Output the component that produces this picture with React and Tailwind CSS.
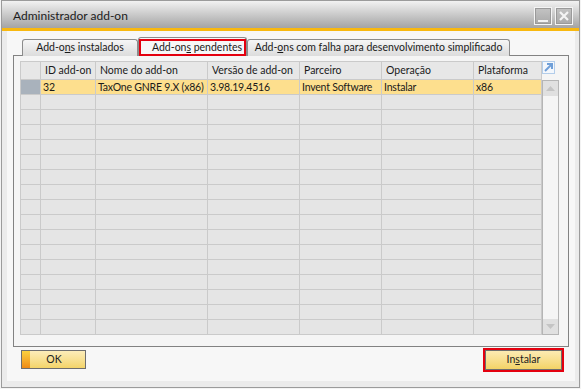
import React from "react";

const columns = [
  { label: "ID add-on", value: "32", width: "w-[55px]" },
  { label: "Nome do add-on", value: "TaxOne GNRE 9.X (x86)", width: "w-[112px]" },
  { label: "Versão de add-on", value: "3.98.19.4516", width: "w-[92px]" },
  { label: "Parceiro", value: "Invent Software", width: "w-[82px]" },
  { label: "Operação", value: "Instalar", width: "w-[92px]" },
  { label: "Plataforma", value: "x86", width: "w-[68px]" },
];

const emptyRows = Array.from({ length: 16 });

function WindowButton({ children }) {
  return (
    <div className="w-[18px] h-[18px] border border-[#f4f4f4] bg-linear-to-b from-[#c4c4c4] to-[#a9a9a9] flex items-center justify-center shadow-[inset_0_0_0_1px_#9a9a9a]">
      {children}
    </div>
  );
}

function Tab({ children, width }) {
  return (
    <div
      className={`${width} h-[17px] shrink-0 border border-b-0 border-[#8c8c8c] rounded-t-[3px] bg-linear-to-b from-[#f6f6f6] to-[#dcdcdc] flex items-center justify-center text-[10.5px] text-[#1a1a1a]`}
    >
      {children}
    </div>
  );
}

export default function App() {
  return (
    <div className="w-[581px] h-[389px] bg-[#f3f3f3] font-['Lato',sans-serif] overflow-hidden">
      <div className="ml-[1px] w-[579px] h-[388px] border border-[#9b9b9b] flex flex-col bg-[#ebebeb]">
        {/* TITLE BAR */}
        <div className="h-[27px] shrink-0 bg-linear-to-b from-[#f2f2f2] to-[#a4a4a4] flex items-center pl-[11px] pr-[6px]">
          <span className="text-[12px] text-[#1c1c1c] pt-[2px]">Administrador add-on</span>
          <div className="ml-auto flex gap-[3px] mt-[2px]">
            <WindowButton>
              <div className="w-[10px] h-[2px] bg-[#f2f2f2] mt-[10px]" />
            </WindowButton>
            <WindowButton>
              <svg width="10" height="10" viewBox="0 0 10 10">
                <path d="M1 1 L9 9 M9 1 L1 9" stroke="#f4f4f4" strokeWidth="2.2" />
              </svg>
            </WindowButton>
          </div>
        </div>
        <div className="h-[3px] shrink-0 bg-[#f8b810]" />

        {/* BODY */}
        <div className="flex-1 pl-[5px] pr-[4px] pb-[6px]">
          <div className="h-full bg-[#f7f7f7] flex flex-col pt-[6px]">
            {/* TABS */}
            <div className="flex items-end pl-[15px] h-[19px] relative z-10">
              <Tab width="w-[116px]">
                <span>
                  Add-o<span className="underline">n</span>s instalados
                </span>
              </Tab>
              <div className="w-[109px] h-[19px] shrink-0 border border-b-0 border-[#8c8c8c] rounded-t-[3px] bg-[#f7f7f7] flex items-end">
                <div className="w-full h-[17px] border-2 border-[#e4000f] flex items-center justify-center pl-[9px] text-[10.5px] text-[#1a1a1a]">
                  <span>
                    Add-on<span className="underline">s</span> pendentes
                  </span>
                </div>
              </div>
              <Tab width="w-[263px]">
                <span>
                  Add-<span className="underline">o</span>ns com falha para desenvolvimento simplificado
                </span>
              </Tab>
            </div>

            {/* PANEL */}
            <div className="mx-[6px] h-[292px] border border-[#828282] bg-[#f5f5f5] pt-[5px] pl-[6px] -mt-px">
              <div className="flex">
                {/* GRID */}
                <div className="w-[522px] border-l border-t border-[#cacaca] text-[10.5px] text-[#1a1a1a]">
                  <div className="flex h-[18px] border-b border-[#cacaca] bg-[#e7e7e7]">
                    <div className="w-[20px] shrink-0 border-r border-[#cacaca]" />
                    {columns.map((c) => (
                      <div
                        key={c.label}
                        className={`${c.width} shrink-0 border-r border-[#cacaca] pl-[4px] pt-[1px] flex items-center whitespace-nowrap overflow-hidden`}
                      >
                        {c.label}
                      </div>
                    ))}
                  </div>
                  <div className="flex h-[15px] border-b border-[#cacaca]">
                    <div className="w-[20px] shrink-0 border-r border-[#cacaca] bg-[#a9b2bc]" />
                    {columns.map((c) => (
                      <div
                        key={c.label}
                        className={`${c.width} shrink-0 border-r border-[#cacaca] bg-[#fddf8e] pl-[2px] pt-[2px] tracking-[-0.2px] flex items-center whitespace-nowrap overflow-hidden`}
                      >
                        {c.value}
                      </div>
                    ))}
                  </div>
                  {emptyRows.map((_, i) => (
                    <div key={i} className="flex h-[15px] border-b border-[#cacaca] bg-[#e5e5e5]">
                      <div className="w-[20px] shrink-0 border-r border-[#cacaca]" />
                      {columns.map((c) => (
                        <div key={c.label} className={`${c.width} shrink-0 border-r border-[#cacaca]`} />
                      ))}
                    </div>
                  ))}
                </div>

                {/* SCROLLBAR */}
                <div className="w-[17px] flex flex-col">
                  <div className="h-[19px]">
                    <svg width="13" height="13" viewBox="0 0 13 13">
                      <rect x="0.5" y="0.5" width="12" height="12" fill="#f3f7fc" stroke="#b3cdea" />
                      <path d="M3 10 L9.5 3.5" stroke="#6f9fd8" strokeWidth="2" />
                      <path d="M5 3 H10 V8" stroke="#6f9fd8" strokeWidth="2" fill="none" />
                    </svg>
                  </div>
                  <div className="h-[255px] border border-[#b5b5b5] bg-[#f5f5f5] flex flex-col justify-between">
                    <div className="h-[15px] bg-[#e0e0e0] flex items-center justify-center">
                      <svg width="9" height="5" viewBox="0 0 9 5">
                        <polygon points="0,5 9,5 4.5,0" fill="#c4c4c4" />
                      </svg>
                    </div>
                    <div className="h-[15px] bg-[#e0e0e0] flex items-center justify-center">
                      <svg width="9" height="5" viewBox="0 0 9 5">
                        <polygon points="0,0 9,0 4.5,5" fill="#c4c4c4" />
                      </svg>
                    </div>
                  </div>
                </div>
              </div>
            </div>

            {/* BUTTONS */}
            <div className="flex items-start justify-between pl-[14px] pr-[11px] mt-[1px] text-[10.5px] text-[#222]">
              <div className="mt-[2px] w-[65px] h-[19px] border border-[#6e6e6e] flex">
                <div className="w-[8px] bg-linear-to-b from-[#fbd13f] to-[#ee8a14]" />
                <div className="flex-1 bg-linear-to-b from-[#fcedb9] to-[#f4d468] flex items-center justify-center pr-[7px]">
                  OK
                </div>
              </div>
              <div className="w-[81px] h-[24px] border-2 border-[#e4000f]">
                <div className="h-full border border-[#6e6e6e] bg-linear-to-b from-[#fcebb2] to-[#f3d365] flex items-center justify-center">
                  <span>
                    In<span className="underline">s</span>talar
                  </span>
                </div>
              </div>
            </div>
          </div>
        </div>
      </div>
    </div>
  );
}
